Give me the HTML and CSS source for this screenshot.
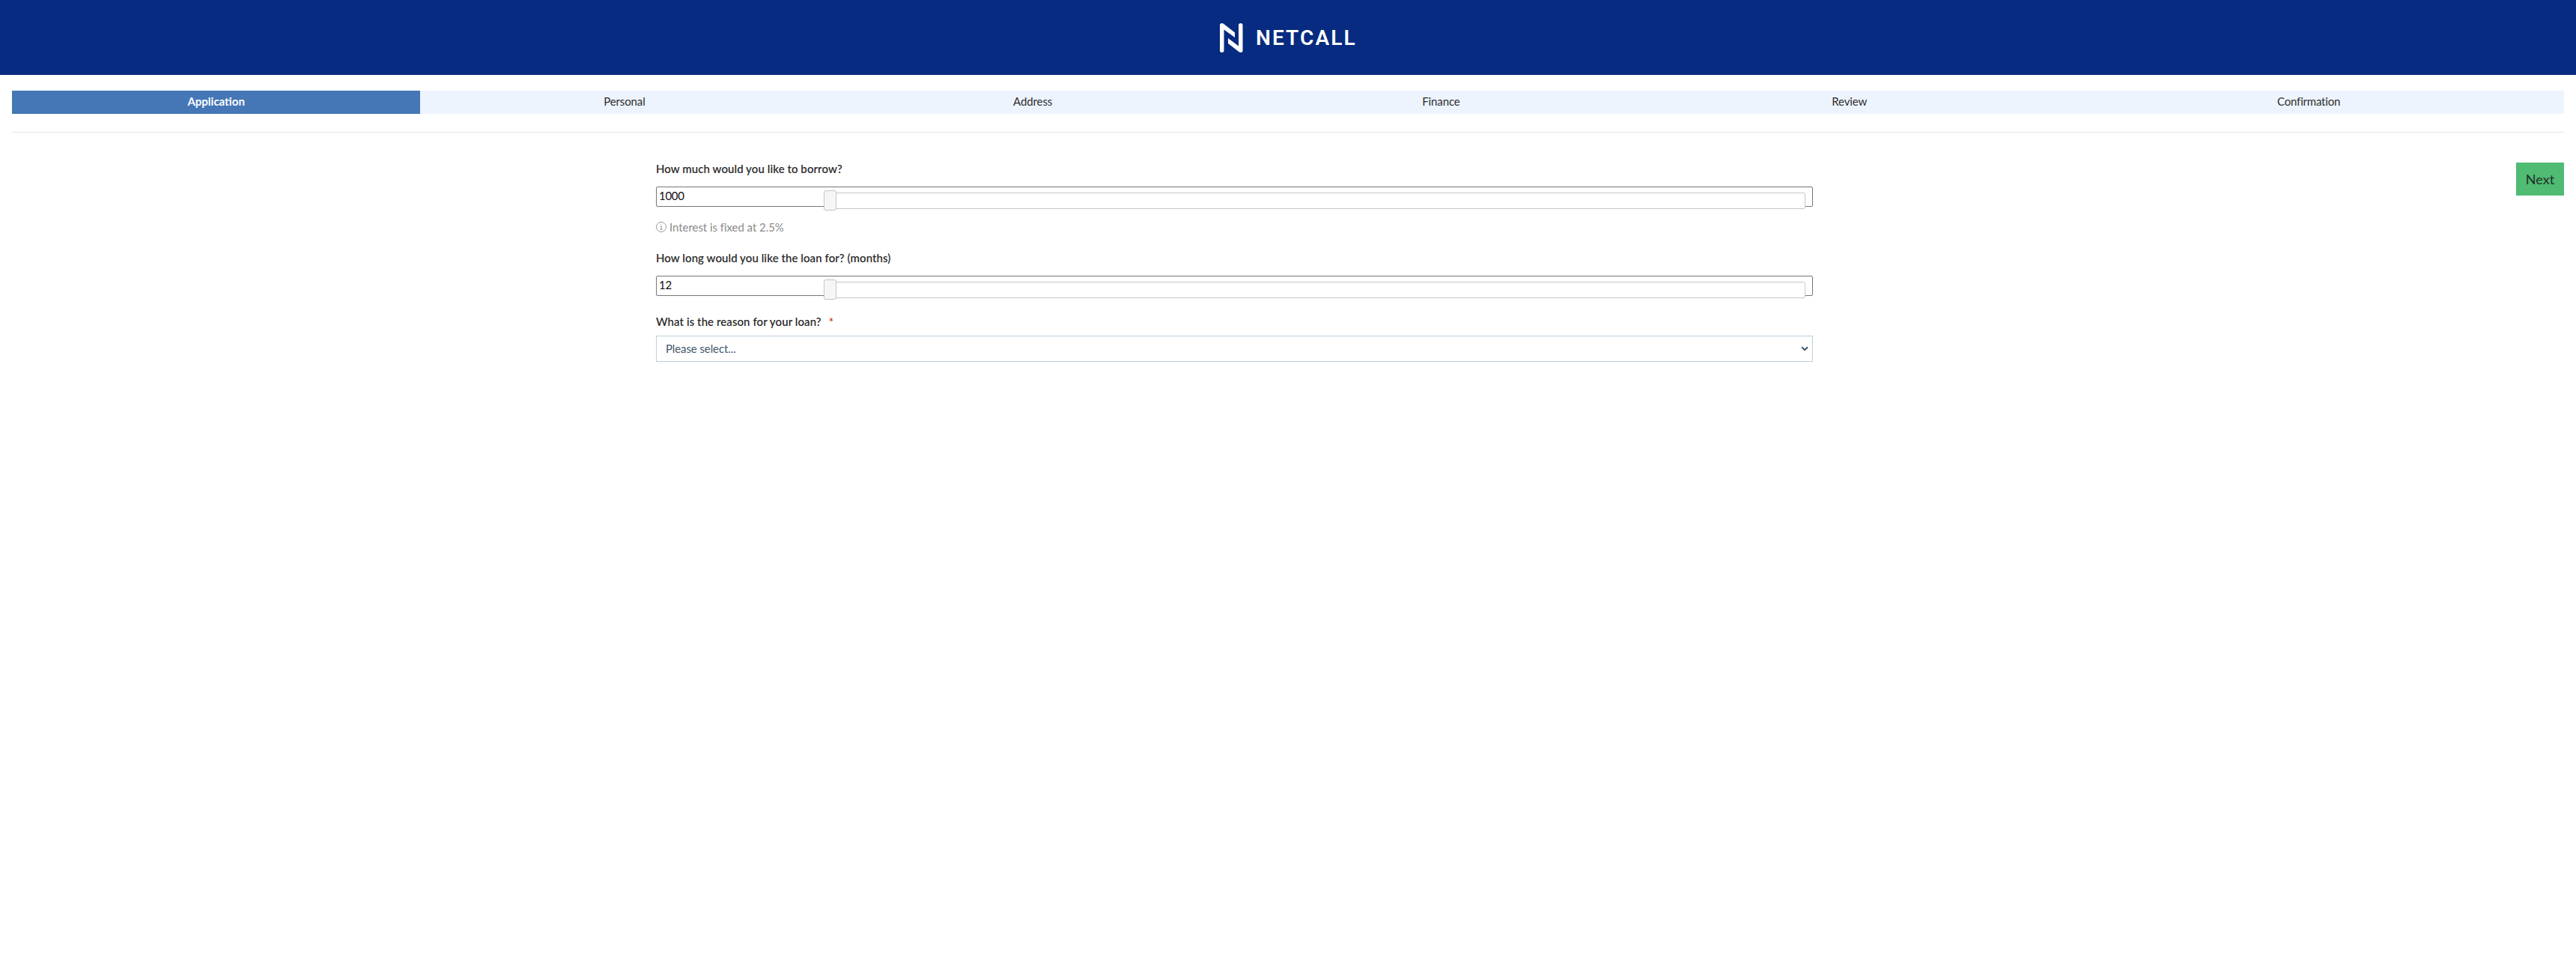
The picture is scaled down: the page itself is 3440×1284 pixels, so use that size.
FILE: index.html
```html
<!DOCTYPE html>
<html lang="en">
<head>
<meta charset="utf-8">
<title>Loan application</title>
<link rel="stylesheet" href="styles.css">
</head>
<body>
<header class="header">
  <svg class="mark" viewBox="0 0 31 39" width="31" height="39" aria-hidden="true">
    <path d="M0 2.5Q0 0 2.5 0Q4 0 5 .8L20 12.5V19L5.500 8.500V36.500Q5.500 39 2.800 39Q0 39 0 36.500ZM30.500 2.500Q30.500 0 27.800 0Q25 0 25 2.500V30.500L11 20V27L25.500 38.200Q26.500 39 28 39Q30.500 39 30.500 36.500Z"/>
  </svg>
  <span class="brand">NETCALL</span>
</header>
<nav class="steps">
  <span class="step active">Application</span>
  <span class="step">Personal</span>
  <span class="step">Address</span>
  <span class="step">Finance</span>
  <span class="step">Review</span>
  <span class="step last">Confirmation</span>
</nav>
<main class="content">
  <form class="form">
    <label class="label">How much would you like to borrow?</label>
    <div class="amount"><span>1000</span><div class="track"></div><div class="handle"></div></div>
    <p class="hint"><svg width="14" height="14" viewBox="0 0 14 14" aria-hidden="true"><circle cx="7" cy="7" r="6.500"/><path d="M5.500 6H7.200V10M5.300 10.200H8.900M7 3.200V4.400"/></svg><span>Interest is fixed at 2.5%</span></p>
    <label class="label">How long would you like the loan for? (months)</label>
    <div class="amount"><span>12</span><div class="track"></div><div class="handle"></div></div>
    <label class="label reason">What is the reason for your loan?<span class="required">*</span></label>
    <div class="select"><span>Please select...</span><svg width="10" height="7" viewBox="0 0 10 7" aria-hidden="true"><path d="M1 1.200L5 5L9 1.200"/></svg></div>
  </form>
  <button class="next" type="button">Next</button>
</main>
</body>
</html>
```
FILE: styles.css
```css
* { box-sizing: border-box; }
body { margin: 0; background: #fff; color: #2d2d2d; font: 15px/20px Lato, "Open Sans", sans-serif; }
.header { height: 100px; padding-left: 1629px; display: flex; align-items: center; background: #062b80; color: #fff; }
.mark { fill: #fff; margin-top: 1px; }
.brand { margin: 2px 0 0 17px; font: 600 28px/40px Roboto, sans-serif; letter-spacing: 2.1px; }
.steps { display: flex; height: 31px; margin: 21px 16px 24px; background: #edf4fd; line-height: 28px; text-align: center; letter-spacing: -.1px; }
.step { width: 16%; }
.step.last { width: 20%; letter-spacing: -.2px; }
.active { background: #4577b7; color: #fff; font-weight: 700; letter-spacing: 0; }
.content { display: flex; justify-content: space-between; align-items: flex-start; margin: 0 16px; border-top: 1px solid #e4e4e4; padding: 40px 0 0 860px; }
.form { width: 1545px; padding-top: 0; }
.label { display: flex; height: 32px; line-height: 16px; font-weight: 600; letter-spacing: .06px; }
.amount { position: relative; height: 27px; padding-left: 3px; border: 1px solid #767676; border-radius: 2px; color: #111; line-height: 22px; letter-spacing: -.3px; }
.track { position: absolute; left: 231px; top: 7px; width: 1303px; height: 22px; border: 1px solid #c5c5c5; border-radius: 3px; background: #fff; }
.handle { position: absolute; left: 223px; top: 4px; width: 17px; height: 27px; border: 1px solid #c5c5c5; border-radius: 3px; background: #f6f6f6; }
.hint { display: flex; gap: 4px; align-items: center; margin: 17px 0 23px; height: 20px; color: #8a8a8a; letter-spacing: -.05px; }
.hint svg { fill: none; stroke: #999; }
.reason { margin-top: 26px; height: 27px; }
.required { margin-left: 10px; color: #c8322b; }
.select { display: flex; justify-content: space-between; align-items: center; height: 35px; padding: 0 5px 1px 12px; border: 1px solid #bccfdb; color: #44576b; letter-spacing: -.1px; }
.select svg { fill: none; stroke: #44576b; stroke-width: 2; }
.next { width: 64px; height: 44px; padding: 0; border: 0; background: #4fbb73; color: #1d3025; font: 18px/44px Lato, sans-serif; }
```
